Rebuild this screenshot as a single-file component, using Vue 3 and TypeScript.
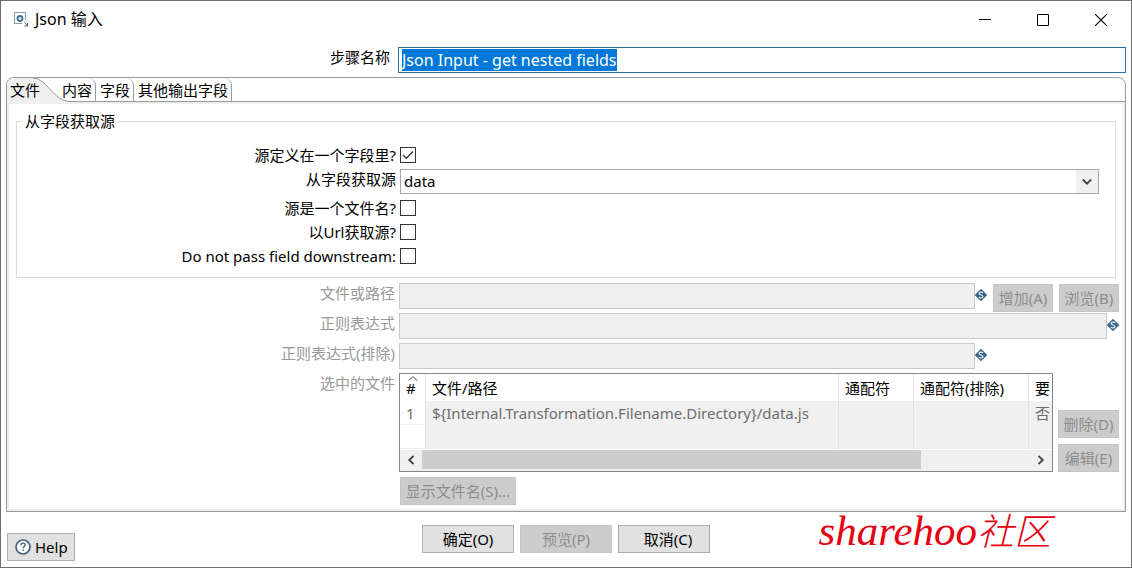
<script setup lang="ts">
import { onMounted, ref } from 'vue'

interface Option {
  id: string
  label: string
  checked: boolean
}

interface FileRow {
  no: string
  path: string
  wildcard: string
  exclude: string
  required: string
}

const tabs = ['文件', '内容', '字段', '其他输出字段']
const activeTab = ref('文件')

const stepName = ref('Json Input - get nested fields')
const stepInput = ref<HTMLInputElement | null>(null)
const sourceField = ref('data')
const inField = ref(true)

const options = ref<Option[]>([
  { id: 'is-file', label: '源是一个文件名?', checked: false },
  { id: 'is-url', label: '以Url获取源?', checked: false },
  { id: 'no-pass', label: 'Do not pass field downstream:', checked: false },
])

const files: FileRow[] = [
  { no: '1', path: '${Internal.Transformation.Filename.Directory}/data.js', wildcard: '', exclude: '', required: '否' },
  { no: '', path: '', wildcard: '', exclude: '', required: '' },
]

onMounted(() => {
  stepInput.value?.focus()
  stepInput.value?.select()
})
</script>

<template>
  <main class="dialog">
    <header class="titlebar">
      <svg class="app-icon" width="16" height="16" viewBox="0 0 16 16" aria-hidden="true">
        <path d="M12.500 8V.5H1.500v11H9" fill="none" stroke="#7f9db9" />
        <circle cx="7" cy="6.500" r="2.500" fill="#dce9f2" stroke="#45708f" stroke-width="1.800" />
        <path d="M11.500 10.500l3 3M14.500 11v3h-3" fill="none" stroke="#4d6070" />
      </svg>
      <h1>Json 输入</h1>
      <div class="window-buttons">
        <button type="button" aria-label="最小化">
          <svg width="12" height="12" viewBox="0 0 12 12"><path d="M0 5.500h12" stroke="#000" /></svg>
        </button>
        <button type="button" aria-label="最大化">
          <svg width="12" height="12" viewBox="0 0 12 12"><path d="M.5.5h11v11H.5z" fill="none" stroke="#000" /></svg>
        </button>
        <button type="button" aria-label="关闭">
          <svg width="12" height="12" viewBox="0 0 12 12"><path d="M0 0l12 12M12 0L0 12" stroke="#000" stroke-width="1.100" /></svg>
        </button>
      </div>
    </header>

    <div class="step-row">
      <label for="step-name">步骤名称</label>
      <input id="step-name" ref="stepInput" v-model="stepName" type="text" spellcheck="false" />
    </div>

    <section class="folder">
      <div class="tabs" role="tablist">
        <button
          v-for="tab in tabs"
          :key="tab"
          type="button"
          role="tab"
          class="tab"
          :class="{ active: tab === activeTab }"
          :aria-selected="tab === activeTab"
          @click="activeTab = tab"
        >
          <svg v-if="tab === activeTab" class="tab-shape" width="66" height="24" viewBox="0 0 66 24" aria-hidden="true">
            <path d="M0 0H26C40 0 46 23.500 63 23.500L66 24H0z" fill="#efefef" />
            <path d="M26 0C40 0 46 23.500 63 23.500H66" fill="none" stroke="#999" />
          </svg>
          <span>{{ tab }}</span>
        </button>
      </div>

      <div class="panel">
        <fieldset>
          <legend>从字段获取源</legend>
          <div class="option">
            <label for="in-field">源定义在一个字段里?</label>
            <input id="in-field" v-model="inField" type="checkbox" />
          </div>
          <div class="option select-row">
            <label for="source-field">从字段获取源</label>
            <div class="combo">
              <select id="source-field" v-model="sourceField">
                <option>data</option>
              </select>
              <span class="combo-arrow">
                <svg width="10" height="8" viewBox="0 0 10 8" aria-hidden="true">
                  <path d="M.8 1.500L5 5.700l4.200-4.200" fill="none" stroke="#444" stroke-width="1.800" />
                </svg>
              </span>
            </div>
          </div>
          <div v-for="option in options" :key="option.id" class="option">
            <label :for="option.id">{{ option.label }}</label>
            <input :id="option.id" v-model="option.checked" type="checkbox" />
          </div>
        </fieldset>

        <div class="rows">
          <div class="row">
            <label for="file-path">文件或路径</label>
            <input id="file-path" type="text" disabled />
            <div class="side wide">
              <svg class="variable" width="12" height="12" viewBox="0 0 12 12" aria-hidden="true">
                <path d="M6 .7L11.300 6 6 11.300.7 6z" fill="#3d6585" stroke="#3d6585" stroke-width="1.400" stroke-linejoin="round" />
                <path d="M8 3.900C7.200 2.700 4.100 2.700 4.100 4.400c0 1.900 3.900 1.200 3.900 3.200 0 1.700-3.200 1.700-4.100.5" fill="none" stroke="#e4eef5" stroke-width="1.200" />
              </svg>
              <div class="pair">
                <button type="button" disabled>增加(A)</button>
                <button type="button" disabled>浏览(B)</button>
              </div>
            </div>
          </div>
          <div class="row">
            <label for="regexp">正则表达式</label>
            <input id="regexp" type="text" disabled />
            <div class="side">
              <svg class="variable" width="12" height="12" viewBox="0 0 12 12" aria-hidden="true">
                <path d="M6 .7L11.300 6 6 11.300.7 6z" fill="#3d6585" stroke="#3d6585" stroke-width="1.400" stroke-linejoin="round" />
                <path d="M8 3.900C7.200 2.700 4.100 2.700 4.100 4.400c0 1.900 3.900 1.200 3.900 3.200 0 1.700-3.200 1.700-4.100.5" fill="none" stroke="#e4eef5" stroke-width="1.200" />
              </svg>
            </div>
          </div>
          <div class="row">
            <label for="regexp-exclude">正则表达式(排除)</label>
            <input id="regexp-exclude" type="text" disabled />
            <div class="side wide">
              <svg class="variable" width="12" height="12" viewBox="0 0 12 12" aria-hidden="true">
                <path d="M6 .7L11.300 6 6 11.300.7 6z" fill="#3d6585" stroke="#3d6585" stroke-width="1.400" stroke-linejoin="round" />
                <path d="M8 3.900C7.200 2.700 4.100 2.700 4.100 4.400c0 1.900 3.900 1.200 3.900 3.200 0 1.700-3.200 1.700-4.100.5" fill="none" stroke="#e4eef5" stroke-width="1.200" />
              </svg>
            </div>
          </div>

          <div class="row table-row">
            <span id="files-label" class="label">选中的文件</span>
            <div class="table-box">
              <table aria-labelledby="files-label">
                <colgroup>
                  <col class="c-no" />
                  <col />
                  <col class="c-wild" />
                  <col class="c-exclude" />
                  <col class="c-required" />
                </colgroup>
                <thead>
                  <tr>
                    <th class="no">
                      <svg class="sort" width="10" height="5" viewBox="0 0 10 5" aria-hidden="true">
                        <path d="M.5 4.500L5 .7l4.500 3.800" fill="none" stroke="#555" />
                      </svg>
                      #
                    </th>
                    <th>文件/路径</th>
                    <th>通配符</th>
                    <th>通配符(排除)</th>
                    <th>要</th>
                  </tr>
                </thead>
                <tbody>
                  <tr v-for="(file, index) in files" :key="index">
                    <td class="no">{{ file.no }}</td>
                    <td>{{ file.path }}</td>
                    <td>{{ file.wildcard }}</td>
                    <td>{{ file.exclude }}</td>
                    <td>{{ file.required }}</td>
                  </tr>
                </tbody>
              </table>
              <div class="scrollbar">
                <button type="button" aria-label="向左滚动">
                  <svg width="8" height="10" viewBox="0 0 8 10"><path d="M6.500 1L2.200 5l4.300 4" fill="none" stroke="#444" stroke-width="1.800" /></svg>
                </button>
                <div class="track"><div class="thumb"></div></div>
                <button type="button" aria-label="向右滚动">
                  <svg width="8" height="10" viewBox="0 0 8 10"><path d="M1.500 1l4.300 4-4.300 4" fill="none" stroke="#444" stroke-width="1.800" /></svg>
                </button>
              </div>
            </div>
            <div class="table-actions">
              <button type="button" disabled>删除(D)</button>
              <button type="button" disabled>编辑(E)</button>
            </div>
          </div>

          <div class="show-row">
            <button type="button" disabled>显示文件名(S)...</button>
          </div>
        </div>
      </div>
    </section>

    <footer>
      <button type="button" class="help">
        <svg width="16" height="16" viewBox="0 0 16 16" aria-hidden="true">
          <circle cx="8" cy="8" r="7" fill="#fff" stroke="#46647c" stroke-width="1.700" />
          <path d="M5.800 6.300c0-3 4.400-2.800 4.400-.3 0 1.500-2 1.600-2 3.300M8.200 10.600v1.500" fill="none" stroke="#46647c" stroke-width="1.400" />
        </svg>
        Help
      </button>
      <div class="actions">
        <button type="button">确定(O)</button>
        <button type="button" disabled>预览(P)</button>
        <button type="button">&nbsp;&nbsp;取消(C)</button>
      </div>
    </footer>
    <div class="watermark">sharehoo<span>社区</span></div>
  </main>
</template>

<style>
body {
  margin: 0;
  background: #fff;
}
</style>

<style scoped>
.dialog,
.dialog * {
  box-sizing: border-box;
}

.dialog {
  position: relative;
  display: flex;
  flex-direction: column;
  min-height: 100vh;
  border: 1px solid #6e6e6e;
  background: #fff;
  color: #000;
  font: 15px/20px 'Noto Sans', 'Noto Sans CJK SC', sans-serif;
}

button,
input,
select {
  margin: 0;
  font: inherit;
  color: inherit;
}

button {
  padding: 0;
  white-space: nowrap;
}

.titlebar {
  display: flex;
  align-items: center;
  height: 38px;
  padding-left: 12px;
}

h1 {
  flex: 1;
  margin: 0 0 2px 6px;
  font-size: 16px;
  font-weight: 400;
}

.window-buttons {
  display: flex;
  padding-right: 1px;
}

.window-buttons button {
  display: grid;
  place-items: center;
  width: 58px;
  height: 36px;
  border: 0;
  background: none;
}

.step-row {
  display: flex;
  gap: 8px;
  margin-top: 8px;
  padding-right: 5px;
}

.step-row label {
  width: 389px;
  text-align: right;
}

.step-row input {
  flex: 1;
  min-width: 0;
  height: 26px;
  padding: 0 3px;
  border: 1px solid #2a6f9f;
  outline: 0;
  background: #fff;
  font-size: 16px;
}

.step-row input::selection {
  background: #0078d7;
  color: #fff;
}

.folder {
  margin: 4px 5px 0;
  border: 1px solid #999;
  border-radius: 8px 8px 0 0;
  overflow: hidden;
}

.tabs {
  display: flex;
  height: 24px;
  border-bottom: 1px solid #999;
}

.tab {
  height: 23px;
  padding: 0 3px 0 4px;
  border: 0;
  border-right: 1px solid #999;
  border-radius: 0 8px 0 0;
  background: none;
}

.tab.active {
  position: relative;
  width: 51px;
  padding: 0 0 0 3px;
  border-right: 0;
  text-align: left;
}

.tab-shape {
  position: absolute;
  top: 0;
  left: 0;
}

.tab span {
  position: relative;
}

.panel {
  padding-bottom: 4px;
  border: 2px solid #eee;
}

fieldset {
  min-width: 0;
  margin: 8px 7px 0;
  padding: 13px 16px 9px 5px;
  border: 1px solid #dcdcdc;
}

legend {
  padding: 0 3px;
  line-height: 18px;
}

.option {
  display: flex;
  align-items: center;
  gap: 4px;
  height: 24px;
}

.option label {
  width: 374px;
  text-align: right;
  white-space: nowrap;
}

.option input {
  appearance: none;
  width: 16px;
  height: 16px;
  border: 1px solid #333;
  background: #fff;
}

.option input:checked {
  background: #fff url("data:image/svg+xml,%3Csvg xmlns='http://www.w3.org/2000/svg' viewBox='0 0 14 14'%3E%3Cpath d='M2 7l3.300 3.300L12 3.500' fill='none' stroke='%23333' stroke-width='1.300'/%3E%3C/svg%3E");
}

.select-row {
  align-items: flex-start;
  height: 25px;
  margin: 2px 0;
}

.combo {
  display: grid;
  flex: 1;
  height: 25px;
}

.combo select,
.combo-arrow {
  grid-area: 1 / 1;
}

.combo select {
  appearance: none;
  width: 100%;
  height: 25px;
  padding: 0 24px 2px 3px;
  border: 1px solid #a3a8ac;
  border-radius: 0;
  background: #fff;
}

.combo-arrow {
  display: grid;
  place-items: center;
  justify-self: end;
  width: 22px;
  margin: 1px;
  background: #f0f0f0;
  pointer-events: none;
}

.rows {
  display: flex;
  flex-direction: column;
  gap: 4px;
  margin-top: 5px;
  padding-right: 4px;
}

.row {
  display: flex;
  height: 26px;
}

.row label,
.label {
  width: 386px;
  margin-right: 4px;
  color: #999;
  text-align: right;
}

.row input {
  flex: 1;
  min-width: 0;
  border: 1px solid #c6cbcf;
  background: #f0f0f0;
}

.side {
  display: flex;
  align-items: flex-start;
  justify-content: space-between;
}

.side.wide {
  width: 144px;
}

.variable {
  margin-top: 6px;
}

.pair {
  display: flex;
  gap: 6px;
  margin-top: 1px;
}

.rows button:disabled,
.actions button:disabled {
  height: 28px;
  border: 1px solid #c5c5c5;
  background: #ccc;
  color: #8c8c8c;
}

.pair button {
  width: 60px;
}

.row.table-row {
  height: auto;
}

.table-box {
  flex: 1;
  min-width: 0;
  border: 1px solid #82868a;
  overflow: hidden;
}

table {
  width: 100%;
  border-collapse: separate;
  border-spacing: 0;
  table-layout: fixed;
}

.c-no {
  width: 26px;
}

.c-wild {
  width: 75px;
}

.c-exclude {
  width: 115px;
}

.c-required {
  width: 23px;
}

th,
td {
  padding: 0 0 0 6px;
  border-right: 1px solid #e2e2e2;
  font-weight: 400;
  text-align: left;
  white-space: nowrap;
}

th:last-child,
td:last-child {
  border-right: 0;
}

th {
  height: 27px;
  padding-top: 1px;
}

td {
  height: 24px;
  background: #f0f0f0;
  color: #6d6d6d;
}

.no {
  position: relative;
}

td.no {
  border-bottom: 1px solid #eee;
  background: #fff;
}

.sort {
  position: absolute;
  top: 2px;
  left: 8px;
}

.scrollbar {
  display: flex;
  height: 22px;
  padding-bottom: 2px;
  border-top: 1px solid #fff;
  background: #f0f0f0;
}

.scrollbar button {
  display: grid;
  place-items: center;
  width: 22px;
  border: 0;
  background: none;
}

.track {
  flex: 1;
}

.thumb {
  width: 82%;
  height: 100%;
  background: #cdcdcd;
}

.table-actions {
  display: flex;
  flex-direction: column;
  justify-content: flex-end;
  gap: 6px;
  width: 66px;
  padding-left: 5px;
}

.show-row {
  padding: 1px 0 0 391px;
}

.show-row button {
  width: 116px;
}

footer {
  display: flex;
  justify-content: center;
  position: relative;
  padding: 13px 0 14px;
}

.actions {
  display: flex;
  gap: 6px;
}

.actions button {
  width: 92px;
  height: 28px;
  border: 1px solid #adadad;
  background: #e1e1e1;
}

.help {
  position: absolute;
  bottom: 6px;
  left: 6px;
  display: flex;
  align-items: center;
  gap: 4px;
  height: 28px;
  padding: 0 6px 0 7px;
  border: 1px solid #adadad;
  background: #e1e1e1;
}

.watermark {
  position: absolute;
  right: 80px;
  bottom: 10px;
  color: #e60012;
  font: italic 300 43px/48px 'Liberation Serif', 'Noto Sans CJK SC', serif;
  pointer-events: none;
}

.watermark span {
  font-size: 37px;
}
</style>
